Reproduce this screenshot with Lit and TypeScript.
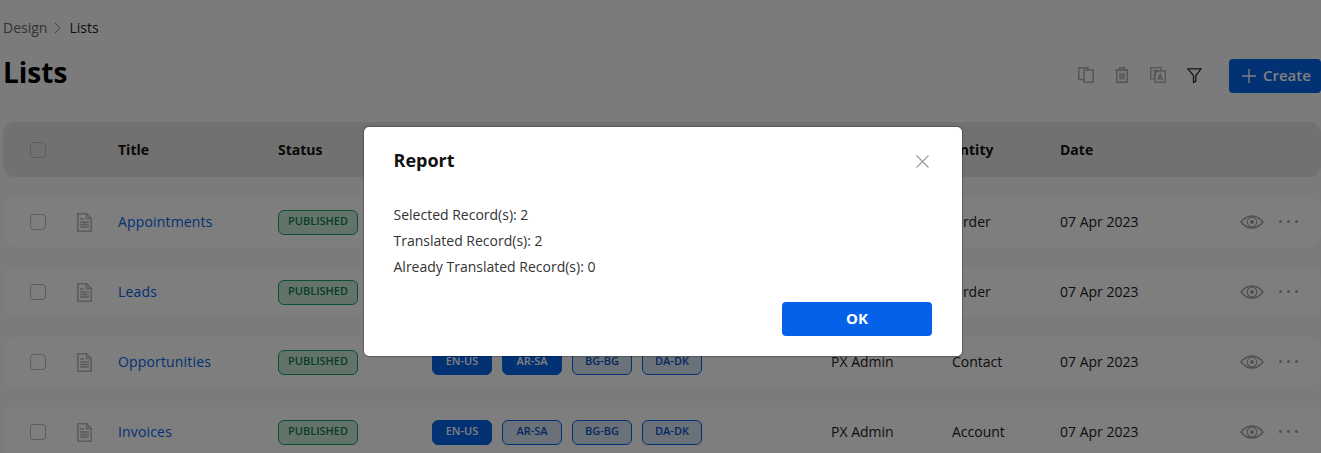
import { LitElement, html, css, svg } from 'lit';
import { customElement } from 'lit/decorators.js';
import { classMap } from 'lit/directives/class-map.js';

interface ListRow {
  title: string;
  langs: string[]; // locales that are already translated
  owner: string;
  entity: string;
}

const LOCALES = ['EN-US', 'AR-SA', 'BG-BG', 'DA-DK'];

// the first two rows sit behind the dialog, so their middle cells stay empty
const ROWS: ListRow[] = [
  { title: 'Appointments', langs: [], owner: '', entity: 'Order' },
  { title: 'Leads', langs: [], owner: '', entity: 'Order' },
  { title: 'Opportunities', langs: ['EN-US', 'AR-SA'], owner: 'PX Admin', entity: 'Contact' },
  { title: 'Invoices', langs: ['EN-US'], owner: 'PX Admin', entity: 'Account' },
];

const docIcon = svg`<svg width="15" height="19" viewBox="0 0 15 19" fill="none">
  <path d="M.8.8h8.700l4.700 4.700v12.700H.8z" stroke="#b8b8b8" stroke-width="1.600"/>
  <path d="M9.500.8v4.700h4.700" stroke="#b8b8b8" stroke-width="1.400"/>
  <path d="M3 6h4M3 9h9M3 11.500h9M3 14h9" stroke="#b8b8b8" stroke-width="1.300"/>
  <path d="M7.500 8.500v6" stroke="#b8b8b8"/>
</svg>`;

const eyeIcon = svg`<svg width="24" height="14" viewBox="0 0 24 14" fill="none">
  <path d="M1 7c3-3.800 6.700-6 11-6s8 2.200 11 6c-3 3.800-6.700 6-11 6S4 10.800 1 7z" stroke="#a0a0a0" stroke-width="1.500"/>
  <circle cx="12" cy="7" r="4.800" stroke="#a0a0a0" stroke-width="1.200"/>
  <circle cx="12" cy="7" r="2" fill="#a0a0a0"/>
</svg>`;

@customElement('app-root')
export class AppRoot extends LitElement {
  static styles = css`
    :host {
      display: block;
      height: 453px;
      overflow: hidden;
      position: relative;
      background: #f6f6f6;
      font-family: 'Open Sans', 'Liberation Sans', sans-serif;
      font-size: 14px;
      color: #1a1a1a;
    }

    .page {
      padding: 18px 0 0 3px;
    }

    .crumbs {
      display: flex;
      align-items: center;
      height: 19px;
      gap: 7px;
      color: #666;
    }

    .crumbs .current {
      color: #1a1a1a;
    }

    .head {
      display: flex;
      align-items: flex-start;
      justify-content: space-between;
      height: 34px;
      margin-top: 22px;
    }

    h1 {
      margin: 0;
      font-size: 28px;
      line-height: 26px;
      font-weight: 700;
      color: #000;
    }

    .tools {
      display: flex;
      align-items: center;
      height: 34px;
    }

    .tool {
      display: flex;
      width: 36px;
      justify-content: center;
      margin-top: -2px;
    }

    .create {
      display: flex;
      align-items: center;
      gap: 7px;
      box-sizing: border-box;
      width: 92px;
      height: 34px;
      padding: 0 0 0 13px;
      margin-left: 17px;
      border: 0;
      border-radius: 4px;
      background: #0562e8;
      color: #fff;
      font: 600 15px 'Open Sans', sans-serif;
    }

    .create span {
      padding-bottom: 2px;
    }

    .row {
      display: grid;
      grid-template-columns: 47px 41px 160px 154px 399px 121px 108px 180px 1fr;
      align-items: center;
      height: 50px;
      padding-left: 27px;
      margin-top: 20px;
      border-radius: 12px;
      background: #fcfcfc;
    }

    .row.header {
      height: 55px;
      margin-top: 29px;
      background: #e2e2e2;
      font-weight: 700;
      color: #111;
    }

    .row .cell {
      padding-bottom: 1px;
    }

    .row.header .cell {
      padding-bottom: 0;
    }

    .box {
      width: 14px;
      height: 14px;
      border: 1px solid #b8b8b8;
      border-radius: 4px;
      background: #fff;
    }

    .header .box {
      background: #e2e2e2;
    }

    .doc {
      display: flex;
    }

    .row .link {
      color: #0562e8;
      letter-spacing: 0.16px;
    }

    .status {
      display: flex;
      align-items: center;
      justify-content: center;
      justify-self: start;
      box-sizing: border-box;
      width: 80px;
      height: 25px;
      padding-bottom: 3px;
      border: 1px solid #12a06a;
      border-radius: 6px;
      background: #c6e6d5;
      color: #0c7a50;
      font-size: 11px;
      font-weight: 600;
    }

    .langs {
      display: flex;
      gap: 10px;
    }

    .chip {
      display: flex;
      align-items: center;
      justify-content: center;
      box-sizing: border-box;
      width: 60px;
      height: 25px;
      padding-bottom: 3px;
      border: 1px solid #0562e8;
      border-radius: 6px;
      background: #d6e2f3;
      color: #0a50c0;
      font-size: 11px;
      font-weight: 600;
    }

    .chip.on {
      background: #0562e8;
      color: #fff;
    }

    .actions {
      display: flex;
      align-items: center;
      gap: 15px;
    }

    .dots {
      display: flex;
      gap: 5px;
      margin-top: -1px;
    }

    .dots i {
      width: 3px;
      height: 3px;
      border-radius: 50%;
      background: #a0a0a0;
    }

    .scrim {
      position: absolute;
      inset: 0;
      background: rgba(0, 0, 0, 0.5);
    }

    .modal {
      position: absolute;
      left: 364px;
      top: 127px;
      box-sizing: border-box;
      width: 598px;
      height: 229px;
      padding: 21px 30px 20px 29.500px;
      border-radius: 5px;
      background: #fff;
      color: #333;
      box-shadow: 0 0 1px 1px rgba(0, 0, 0, 0.25);
    }

    .modal-head {
      display: flex;
      align-items: center;
      justify-content: space-between;
      height: 24px;
    }

    .modal-head h2 {
      margin: 0;
      font-size: 18px;
      font-weight: 700;
      color: #111;
    }

    .close {
      display: flex;
      margin: 2px 3px 0 0;
    }

    .lines {
      margin-top: 30px;
      line-height: 26px;
    }

    .foot {
      display: flex;
      justify-content: flex-end;
      margin-top: 22px;
    }

    .ok {
      width: 150px;
      height: 34px;
      padding: 0 0 2px;
      border: 0;
      border-radius: 4px;
      background: #0562e8;
      color: #fff;
      font: 700 15px 'Open Sans', sans-serif;
    }
  `;

  private renderTools() {
    return html`<div class="tools">
      <span class="tool"><svg width="16" height="16" viewBox="0 0 16 16" fill="none" stroke="#a8a8a8" stroke-width="1.400">
        <path d="M10 3V.8H.8v11.700H6"/><rect x="6" y="3" width="9.200" height="12.200"/>
      </svg></span>
      <span class="tool"><svg width="14" height="16" viewBox="0 0 14 16" fill="none" stroke="#a8a8a8" stroke-width="1.400">
        <path d="M.5 3h13M4.500 3V.8h5V3"/><path d="M1.800 3v12.200h10.400V3"/><path d="M5 6v6.500M7 6v6.500M9 6v6.500"/>
      </svg></span>
      <span class="tool"><svg width="16" height="16" viewBox="0 0 16 16" fill="none" stroke="#a8a8a8" stroke-width="1.300">
        <path d="M11 4V.7H.7v11H5"/><rect x="5" y="4" width="10.300" height="11.300"/>
        <path d="M3 3.500h5M3.500 9l4-5.500"/><path d="M8 13l2.200-6 2.200 6M9 11.500h2.500"/>
      </svg></span>
      <span class="tool"><svg width="15" height="15" viewBox="0 0 15 15" fill="none" stroke="#2a2a2a" stroke-width="1.300">
        <path d="M.8.8h13.400L8.800 7.500v5.800L6.500 14.500V7.500z"/>
      </svg></span>
      <button class="create">
        <svg width="14" height="14" viewBox="0 0 14 14" stroke="#fff" stroke-width="1.400"><path d="M7 0v14M0 7h14"/></svg>
        <span>Create</span>
      </button>
    </div>`;
  }

  private renderRow(row: ListRow) {
    return html`<div class="row">
      <span class="box"></span>
      <span class="doc">${docIcon}</span>
      <span class="cell link">${row.title}</span>
      <span class="status">PUBLISHED</span>
      <span class="langs">
        ${row.owner
          ? LOCALES.map(
              (l) => html`<span class=${classMap({ chip: true, on: row.langs.includes(l) })}>${l}</span>`
            )
          : ''}
      </span>
      <span class="cell">${row.owner}</span>
      <span class="cell">${row.entity}</span>
      <span class="cell">07 Apr 2023</span>
      <span class="actions">${eyeIcon}<span class="dots"><i></i><i></i><i></i></span></span>
    </div>`;
  }

  render() {
    return html`
      <div class="page">
        <div class="crumbs">
          <span>Design</span>
          <svg width="8" height="12" viewBox="0 0 8 12" fill="none" stroke="#888"><path d="M1 1l5 5-5 5"/></svg>
          <span class="current">Lists</span>
        </div>
        <div class="head">
          <h1>Lists</h1>
          ${this.renderTools()}
        </div>
        <div class="row header">
          <span class="box"></span>
          <span></span>
          <span class="cell">Title</span>
          <span class="cell">Status</span>
          <span></span>
          <span></span>
          <span class="cell">Entity</span>
          <span class="cell">Date</span>
          <span></span>
        </div>
        ${ROWS.map((r) => this.renderRow(r))}
      </div>
      <div class="scrim"></div>
      <div class="modal">
        <div class="modal-head">
          <h2>Report</h2>
          <span class="close"><svg width="13" height="13" viewBox="0 0 13 13" stroke="#999" stroke-width="1.100"><path d="M.5.500l12 12M12.500.500l-12 12"/></svg></span>
        </div>
        <div class="lines">
          <div>Selected Record(s): 2</div>
          <div>Translated Record(s): 2</div>
          <div>Already Translated Record(s): 0</div>
        </div>
        <div class="foot"><button class="ok">OK</button></div>
      </div>
    `;
  }
}
